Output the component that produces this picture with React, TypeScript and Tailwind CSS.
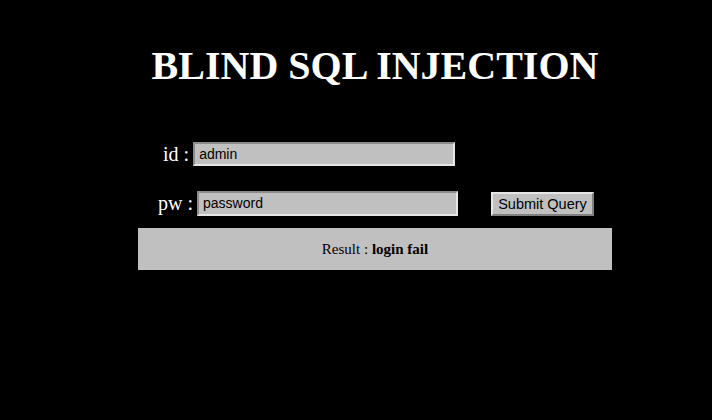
import React from "react";

export default function App() {
  return (
    <div className="w-[712px] h-[420px] bg-black overflow-hidden font-['Liberation_Serif','Times_New_Roman',serif]">
      <div className="ml-[138px] w-[474px] pt-[46px]">
        <h1 className="text-center text-white font-bold text-[40px] leading-[40px] whitespace-nowrap">
          BLIND SQL INJECTION
        </h1>
        <div className="mt-[56px] flex items-center h-[24px] pl-[25px] text-white text-[20px] leading-[24px]">
          <span className="mr-[4px] whitespace-nowrap">id :</span>
          <input
            readOnly
            value="admin"
            className="w-[262px] h-[24px] bg-[#c0c0c0] text-black text-[14px] pl-[4px] border-2 border-t-[#8c8c8c] border-l-[#8c8c8c] border-r-[#e6e6e6] border-b-[#e6e6e6] outline-none font-['Liberation_Sans',Arial,sans-serif]"
          />
        </div>
        <div className="mt-[25px] flex items-center h-[25px] pl-[20px] text-white text-[20px] leading-[25px]">
          <span className="mr-[4px] whitespace-nowrap">pw :</span>
          <input
            readOnly
            value="password"
            className="w-[261px] h-[25px] bg-[#c0c0c0] text-black text-[14px] pl-[4px] border-2 border-t-[#8c8c8c] border-l-[#8c8c8c] border-r-[#e6e6e6] border-b-[#e6e6e6] outline-none font-['Liberation_Sans',Arial,sans-serif]"
          />
          <button className="ml-[33px] w-[103px] h-[24px] bg-[#c0c0c0] text-black text-[14.5px] leading-[20px] border-2 border-t-[#e6e6e6] border-l-[#e6e6e6] border-r-[#808080] border-b-[#808080] whitespace-nowrap p-0 font-['Liberation_Sans',Arial,sans-serif]">
            Submit Query
          </button>
        </div>
        <div className="mt-[12px] h-[42px] bg-[#c0c0c0] flex items-center justify-center text-black text-[15px]">
          <span>
            Result : <b>login fail</b>
          </span>
        </div>
      </div>
    </div>
  );
}
